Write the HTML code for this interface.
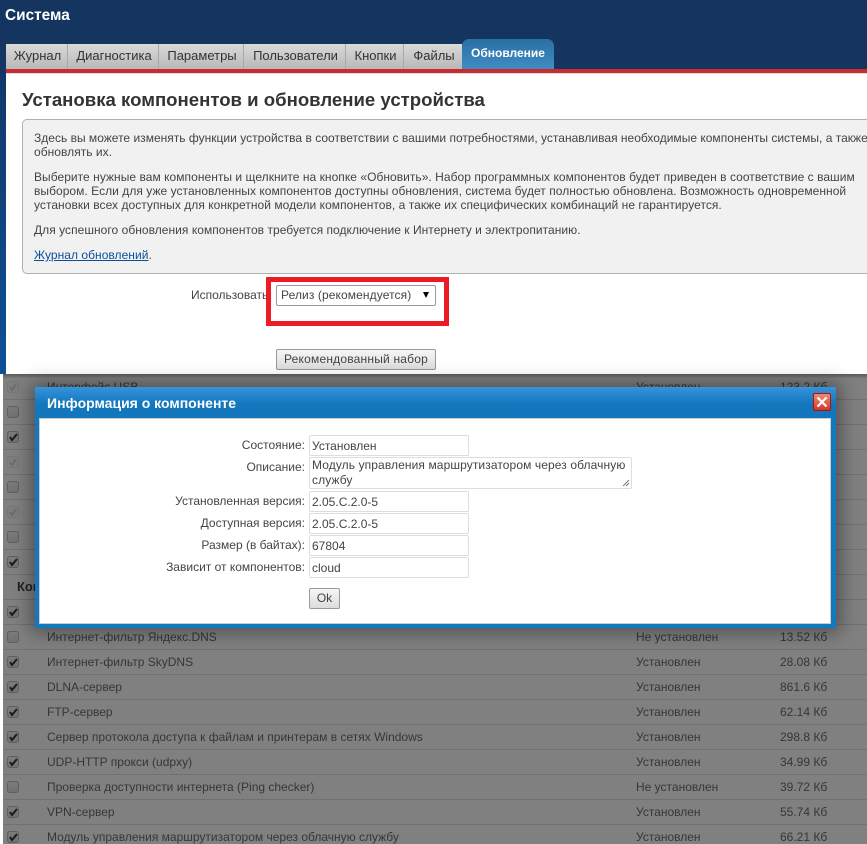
<!DOCTYPE html>
<html lang="ru"><head><meta charset="utf-8"><title>Система</title>
<style>
html,body{margin:0;padding:0;width:867px;height:844px;overflow:hidden;background:#fff}
#w{width:867px;height:844px;position:relative;overflow:hidden;background:#fff;font:12px/14px "Liberation Sans",Arial,sans-serif;color:#333}
.a{position:absolute;white-space:nowrap}
.t{letter-spacing:.04px;color:#444}
.tab{position:absolute;top:44px;height:25px;line-height:24px;font-size:13px;text-align:center;color:#333;background:linear-gradient(#dadada,#b8b8b8);border-right:1px solid #a8a8a8;box-sizing:border-box;padding-left:2px}
.fld{position:absolute;left:309px;width:160px;height:21px;box-sizing:border-box;border:1px solid #ddd;border-radius:2px;background:#fff;padding-left:2px;line-height:20px;font-size:12px;color:#444}
.lbl{position:absolute;width:305px;left:0;text-align:right;color:#444;line-height:14px}
.btn{position:absolute;box-sizing:border-box;border:1px solid #999;border-radius:2px;background:linear-gradient(#f6f6f6,#dcdcdc);text-align:center;color:#444;line-height:18px}
.row{position:absolute;left:3px;width:864px;height:25px;border-bottom:1px solid #717171;box-sizing:border-box;color:#363636}
.row .n{position:absolute;left:44px;top:5px;white-space:nowrap}
.row .s{position:absolute;left:633px;top:5px;white-space:nowrap}
.row .z{position:absolute;left:777px;top:5px;white-space:nowrap}
.cb{position:absolute;left:4px;top:6px;width:12px;height:12px;box-sizing:border-box;border:1px solid #5f5f5f;border-radius:3px;background:linear-gradient(#7c7c7c,#727272)}
.cb svg{position:absolute;left:0;top:0;width:10px;height:10px}
.cb.d{border-color:#767676;background:#7e7e7e}
</style></head><body><div id="w">
<div class="a" style="left:0;top:0;width:867px;height:74px;background:#13355f"></div>
<div class="a" style="left:0;top:74px;width:6px;height:300px;background:linear-gradient(#13386a,#0d5097)"></div>
<div class="a" style="left:5px;top:7px;color:#fff;font-size:15.4px;line-height:18px;font-weight:bold">Система</div>
<div class="tab" style="left:6px;width:62px">Журнал</div>
<div class="tab" style="left:68px;width:91px">Диагностика</div>
<div class="tab" style="left:159px;width:85px">Параметры</div>
<div class="tab" style="left:244px;width:102px">Пользователи</div>
<div class="tab" style="left:346px;width:58px">Кнопки</div>
<div class="tab" style="left:404px;width:58px;border-right:0">Файлы</div>
<div class="a" style="left:462px;top:39px;width:92px;height:30px;border-radius:7px 7px 0 0;background:linear-gradient(#2a6fa5,#3f8cc4);color:#fff;font-weight:bold;text-align:center;line-height:28px;font-size:12px">Обновление</div>
<div class="a" style="left:6px;top:69px;width:861px;height:4px;background:#c62d2f"></div>
<div class="a" style="left:6px;top:73px;width:861px;height:301px;background:#fff;border-top:1px solid #ddd;box-sizing:border-box"></div>
<div class="a" style="left:22px;top:89px;font-size:18.6px;line-height:21px;font-weight:bold;color:#333">Установка компонентов и обновление устройства</div>
<div class="a" style="left:22px;top:119px;width:860px;height:155px;box-sizing:border-box;background:#f1f1f1;border:1px solid #b0b0b0;border-radius:5px"></div>
<div class="a t" style="left:34px;top:131px;letter-spacing:.01px">Здесь вы можете изменять функции устройства в соответствии с вашими потребностями, устанавливая необходимые компоненты системы, а также</div>
<div class="a t" style="left:34px;top:145px">обновлять их.</div>
<div class="a t" style="left:34px;top:170px">Выберите нужные вам компоненты и щелкните на кнопке «Обновить». Набор программных компонентов будет приведен в соответствие с вашим</div>
<div class="a t" style="left:34px;top:184px">выбором. Если для уже установленных компонентов доступны обновления, система будет полностью обновлена. Возможность одновременной</div>
<div class="a t" style="left:34px;top:198px">установки всех доступных для конкретной модели компонентов, а также их специфических комбинаций не гарантируется.</div>
<div class="a t" style="left:34px;top:223px">Для успешного обновления компонентов требуется подключение к Интернету и электропитанию.</div>
<div class="a t" style="left:34px;top:248px"><span style="color:#0b4f9c;text-decoration:underline">Журнал обновлений</span>.</div>
<div class="a" style="left:191px;top:288px;color:#444">Использовать:</div>
<div class="a" style="left:266px;top:277px;width:183px;height:49px;box-sizing:border-box;border:5px solid #ed1c24"></div>
<div class="btn" style="left:276px;top:285px;width:160px;height:21px;background:#fff;text-align:left;padding-left:4px;color:#444;line-height:19px;letter-spacing:.1px">Релиз (рекомендуется)</div>
<div class="a" style="left:423px;top:292px;width:0;height:0;border-left:3.5px solid transparent;border-right:3.5px solid transparent;border-top:6px solid #000"></div>
<div class="btn" style="left:276px;top:349px;width:160px;height:21px;letter-spacing:.2px">Рекомендованный набор</div>

<div class="a" style="left:3px;top:374px;width:864px;height:470px;background:#808080;overflow:hidden">
 <div style="position:absolute;left:0;top:0;width:864px;height:4px;background:linear-gradient(#5a5a5a,#7a7a7a)"></div>
</div>
<div class="row" style="top:375px"><div class="cb d"><svg viewBox="0 0 10 10"><path d="M2 5l2 3 4-6" fill="none" stroke="#6c6c6c" stroke-width="2"/></svg></div><div class="n">Интерфейс USB</div><div class="s">Установлен</div><div class="z">123.2 Кб</div></div>
<div class="row" style="top:400px"><div class="cb"></div></div>
<div class="row" style="top:425px"><div class="cb"><svg viewBox="0 0 10 10"><path d="M2 5l2 3 5-6" fill="none" stroke="#1a1a1a" stroke-width="2"/></svg></div></div>
<div class="row" style="top:450px"><div class="cb d"><svg viewBox="0 0 10 10"><path d="M2 5l2 3 4-6" fill="none" stroke="#6c6c6c" stroke-width="2"/></svg></div></div>
<div class="row" style="top:475px"><div class="cb"></div></div>
<div class="row" style="top:500px"><div class="cb d"><svg viewBox="0 0 10 10"><path d="M2 5l2 3 4-6" fill="none" stroke="#6c6c6c" stroke-width="2"/></svg></div></div>
<div class="row" style="top:525px"><div class="cb"></div></div>
<div class="row" style="top:550px"><div class="cb"><svg viewBox="0 0 10 10"><path d="M2 5l2 3 5-6" fill="none" stroke="#1a1a1a" stroke-width="2"/></svg></div></div>
<div class="row" style="top:575px"><div class="n" style="left:14px;font-weight:bold;font-size:13px;color:#222">Компоненты</div></div>
<div class="row" style="top:600px"><div class="cb"><svg viewBox="0 0 10 10"><path d="M2 5l2 3 5-6" fill="none" stroke="#1a1a1a" stroke-width="2"/></svg></div></div>
<div class="row" style="top:625px"><div class="cb"></div><div class="n">Интернет-фильтр Яндекс.DNS</div><div class="s">Не установлен</div><div class="z">13.52 Кб</div></div>
<div class="row" style="top:650px"><div class="cb"><svg viewBox="0 0 10 10"><path d="M2 5l2 3 5-6" fill="none" stroke="#1a1a1a" stroke-width="2"/></svg></div><div class="n">Интернет-фильтр SkyDNS</div><div class="s">Установлен</div><div class="z">28.08 Кб</div></div>
<div class="row" style="top:675px"><div class="cb"><svg viewBox="0 0 10 10"><path d="M2 5l2 3 5-6" fill="none" stroke="#1a1a1a" stroke-width="2"/></svg></div><div class="n">DLNA-сервер</div><div class="s">Установлен</div><div class="z">861.6 Кб</div></div>
<div class="row" style="top:700px"><div class="cb"><svg viewBox="0 0 10 10"><path d="M2 5l2 3 5-6" fill="none" stroke="#1a1a1a" stroke-width="2"/></svg></div><div class="n">FTP-сервер</div><div class="s">Установлен</div><div class="z">62.14 Кб</div></div>
<div class="row" style="top:725px"><div class="cb"><svg viewBox="0 0 10 10"><path d="M2 5l2 3 5-6" fill="none" stroke="#1a1a1a" stroke-width="2"/></svg></div><div class="n">Сервер протокола доступа к файлам и принтерам в сетях Windows</div><div class="s">Установлен</div><div class="z">298.8 Кб</div></div>
<div class="row" style="top:750px"><div class="cb"><svg viewBox="0 0 10 10"><path d="M2 5l2 3 5-6" fill="none" stroke="#1a1a1a" stroke-width="2"/></svg></div><div class="n">UDP-HTTP прокси (udpxy)</div><div class="s">Установлен</div><div class="z">34.99 Кб</div></div>
<div class="row" style="top:775px"><div class="cb"></div><div class="n">Проверка доступности интернета (Ping checker)</div><div class="s">Не установлен</div><div class="z">39.72 Кб</div></div>
<div class="row" style="top:800px"><div class="cb"><svg viewBox="0 0 10 10"><path d="M2 5l2 3 5-6" fill="none" stroke="#1a1a1a" stroke-width="2"/></svg></div><div class="n">VPN-сервер</div><div class="s">Установлен</div><div class="z">55.74 Кб</div></div>
<div class="row" style="top:825px"><div class="cb"><svg viewBox="0 0 10 10"><path d="M2 5l2 3 5-6" fill="none" stroke="#1a1a1a" stroke-width="2"/></svg></div><div class="n">Модуль управления маршрутизатором через облачную службу</div><div class="s">Установлен</div><div class="z">66.21 Кб</div></div>

<div class="a" style="left:35px;top:387px;width:801px;height:241px;background:#1279c0;box-shadow:0 0 18px 4px rgba(0,0,0,.4)">
 <div style="position:absolute;left:0;top:0;width:801px;height:31px;background:linear-gradient(#3494dc,#1377bd 55%,#1277bb)"></div>
</div>
<div class="a" style="left:47px;top:394px;color:#fff;font-size:14px;line-height:18px;font-weight:bold">Информация о компоненте</div>
<div class="a" style="left:813px;top:393px;width:18px;height:18px;box-sizing:border-box;border:1px solid #b01010;border-radius:2px;background:linear-gradient(#f08a70,#d33a28)">
 <svg viewBox="0 0 16 16" width="16" height="16" style="display:block"><path d="M3.5 3.5l9 9M12.5 3.5l-9 9" stroke="#fff" stroke-width="2.2" fill="none"/></svg>
</div>
<div class="a" style="left:39px;top:418px;width:792px;height:206px;background:#fff;border:1px solid #ccc;box-sizing:border-box"></div>

<div class="lbl" style="top:438px">Состояние:</div>
<div class="fld" style="top:435px">Установлен</div>
<div class="lbl" style="top:460px">Описание:</div>
<div class="fld" style="top:457px;width:323px;height:32px;line-height:15px;padding-top:0;white-space:normal;letter-spacing:.1px">Модуль управления маршрутизатором через облачную службу
 <svg width="8" height="8" viewBox="0 0 8 8" style="position:absolute;right:1px;bottom:1px"><path d="M1 7L7 1M4 7l3-3" stroke="#777" fill="none"/></svg>
</div>
<div class="lbl" style="top:494px">Установленная версия:</div>
<div class="fld" style="top:491px">2.05.C.2.0-5</div>
<div class="lbl" style="top:516px">Доступная версия:</div>
<div class="fld" style="top:513px">2.05.C.2.0-5</div>
<div class="lbl" style="top:538px">Размер (в байтах):</div>
<div class="fld" style="top:535px">67804</div>
<div class="lbl" style="top:560px">Зависит от компонентов:</div>
<div class="fld" style="top:557px">cloud</div>
<div class="btn" style="left:309px;top:588px;width:31px;height:21px">Ok</div>
</div></body></html>
